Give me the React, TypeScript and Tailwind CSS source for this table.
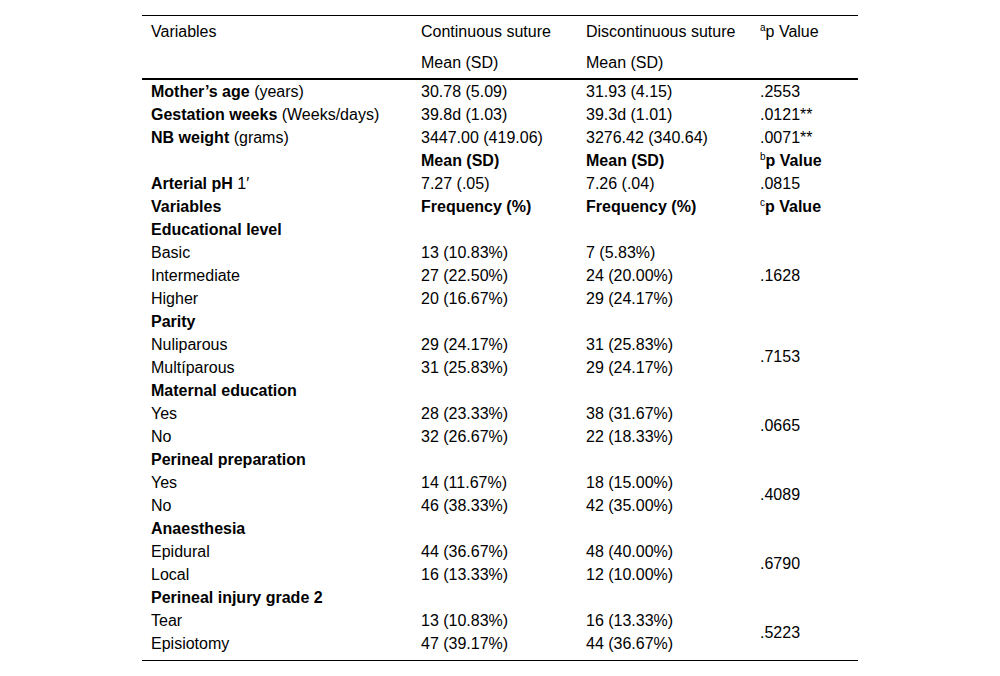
import React from "react";

type Row =
  | { kind: "data"; label: string; bold?: string; c1: string; c2: string; p?: string; span?: number; boldAll?: boolean; sup?: string }
  | { kind: "group"; label: string };

const ROWS: Row[] = [
  { kind: "data", label: " (years)", bold: "Mother’s age", c1: "30.78 (5.09)", c2: "31.93 (4.15)", p: ".2553" },
  { kind: "data", label: " (Weeks/days)", bold: "Gestation weeks", c1: "39.8d (1.03)", c2: "39.3d (1.01)", p: ".0121**" },
  { kind: "data", label: " (grams)", bold: "NB weight", c1: "3447.00 (419.06)", c2: "3276.42 (340.64)", p: ".0071**" },
  { kind: "data", label: "", c1: "Mean (SD)", c2: "Mean (SD)", p: "p Value", sup: "b", boldAll: true },
  { kind: "data", label: " 1′", bold: "Arterial pH", c1: "7.27 (.05)", c2: "7.26 (.04)", p: ".0815" },
  { kind: "data", label: "", bold: "Variables", c1: "Frequency (%)", c2: "Frequency (%)", p: "p Value", sup: "c", boldAll: true },
  { kind: "group", label: "Educational level" },
  { kind: "data", label: "Basic", c1: "13 (10.83%)", c2: "7 (5.83%)" },
  { kind: "data", label: "Intermediate", c1: "27 (22.50%)", c2: "24 (20.00%)", p: ".1628" },
  { kind: "data", label: "Higher", c1: "20 (16.67%)", c2: "29 (24.17%)" },
  { kind: "group", label: "Parity" },
  { kind: "data", label: "Nuliparous", c1: "29 (24.17%)", c2: "31 (25.83%)", p: ".7153", span: 2 },
  { kind: "data", label: "Multíparous", c1: "31 (25.83%)", c2: "29 (24.17%)", span: 0 },
  { kind: "group", label: "Maternal education" },
  { kind: "data", label: "Yes", c1: "28 (23.33%)", c2: "38 (31.67%)", p: ".0665", span: 2 },
  { kind: "data", label: "No", c1: "32 (26.67%)", c2: "22 (18.33%)", span: 0 },
  { kind: "group", label: "Perineal preparation" },
  { kind: "data", label: "Yes", c1: "14 (11.67%)", c2: "18 (15.00%)", p: ".4089", span: 2 },
  { kind: "data", label: "No", c1: "46 (38.33%)", c2: "42 (35.00%)", span: 0 },
  { kind: "group", label: "Anaesthesia" },
  { kind: "data", label: "Epidural", c1: "44 (36.67%)", c2: "48 (40.00%)", p: ".6790", span: 2 },
  { kind: "data", label: "Local", c1: "16 (13.33%)", c2: "12 (10.00%)", span: 0 },
  { kind: "group", label: "Perineal injury grade 2" },
  { kind: "data", label: "Tear", c1: "13 (10.83%)", c2: "16 (13.33%)", p: ".5223", span: 2 },
  { kind: "data", label: "Episiotomy", c1: "47 (39.17%)", c2: "44 (36.67%)", span: 0 },
];

const CELL = "pl-[9px] h-[23px] p-0 align-middle text-left";
const HEAD = "pl-[9px] text-left align-middle font-normal";
const SUP = "relative -top-[6px] text-[10px]";

export default function App() {
  return (
    <div className="min-h-[676px] bg-white pt-[15px] text-[16px] text-black" style={{ fontFamily: '"Liberation Sans", Arial, sans-serif' }}>
      <div className="mx-auto w-[716px] border-y border-black pb-[5px]">
        <table className="w-full table-fixed border-collapse leading-[23px]">
          <colgroup>
            <col className="w-[270px]" />
            <col className="w-[165px]" />
            <col className="w-[174px]" />
            <col className="w-[107px]" />
          </colgroup>
          <thead className="border-b-2 border-black">
            <tr>
              <th className={`h-[31px] ${HEAD}`}>Variables</th>
              <th className={`h-[31px] ${HEAD}`}>Continuous suture</th>
              <th className={`h-[31px] ${HEAD}`}>Discontinuous suture</th>
              <th className={`h-[31px] ${HEAD}`}>
                <sup className={SUP}>a</sup>p Value
              </th>
            </tr>
            <tr>
              <th className="h-[32px]" />
              <th className={`h-[32px] ${HEAD}`}>Mean (SD)</th>
              <th className={`h-[32px] ${HEAD}`}>Mean (SD)</th>
              <th className="h-[32px]" />
            </tr>
          </thead>
          <tbody>
            {ROWS.map((r, i) => {
              if (r.kind === "group") {
                return (
                  <tr key={i}>
                    <td className={`${CELL} font-bold`}>{r.label}</td>
                    <td className={CELL} />
                    <td className={CELL} />
                    <td className={CELL} />
                  </tr>
                );
              }
              const w = r.boldAll ? "font-bold" : "";
              return (
                <tr key={i}>
                  <td className={CELL}>
                    {r.bold && <span className="font-bold">{r.bold}</span>}
                    {r.label}
                  </td>
                  <td className={`${CELL} ${w}`}>{r.c1}</td>
                  <td className={`${CELL} ${w}`}>{r.c2}</td>
                  {r.span !== 0 && (
                    <td className={`${CELL} ${w}`} rowSpan={r.span ?? 1}>
                      {r.sup && <sup className={`${SUP} font-normal`}>{r.sup}</sup>}
                      {r.p}
                    </td>
                  )}
                </tr>
              );
            })}
          </tbody>
        </table>
      </div>
    </div>
  );
}
